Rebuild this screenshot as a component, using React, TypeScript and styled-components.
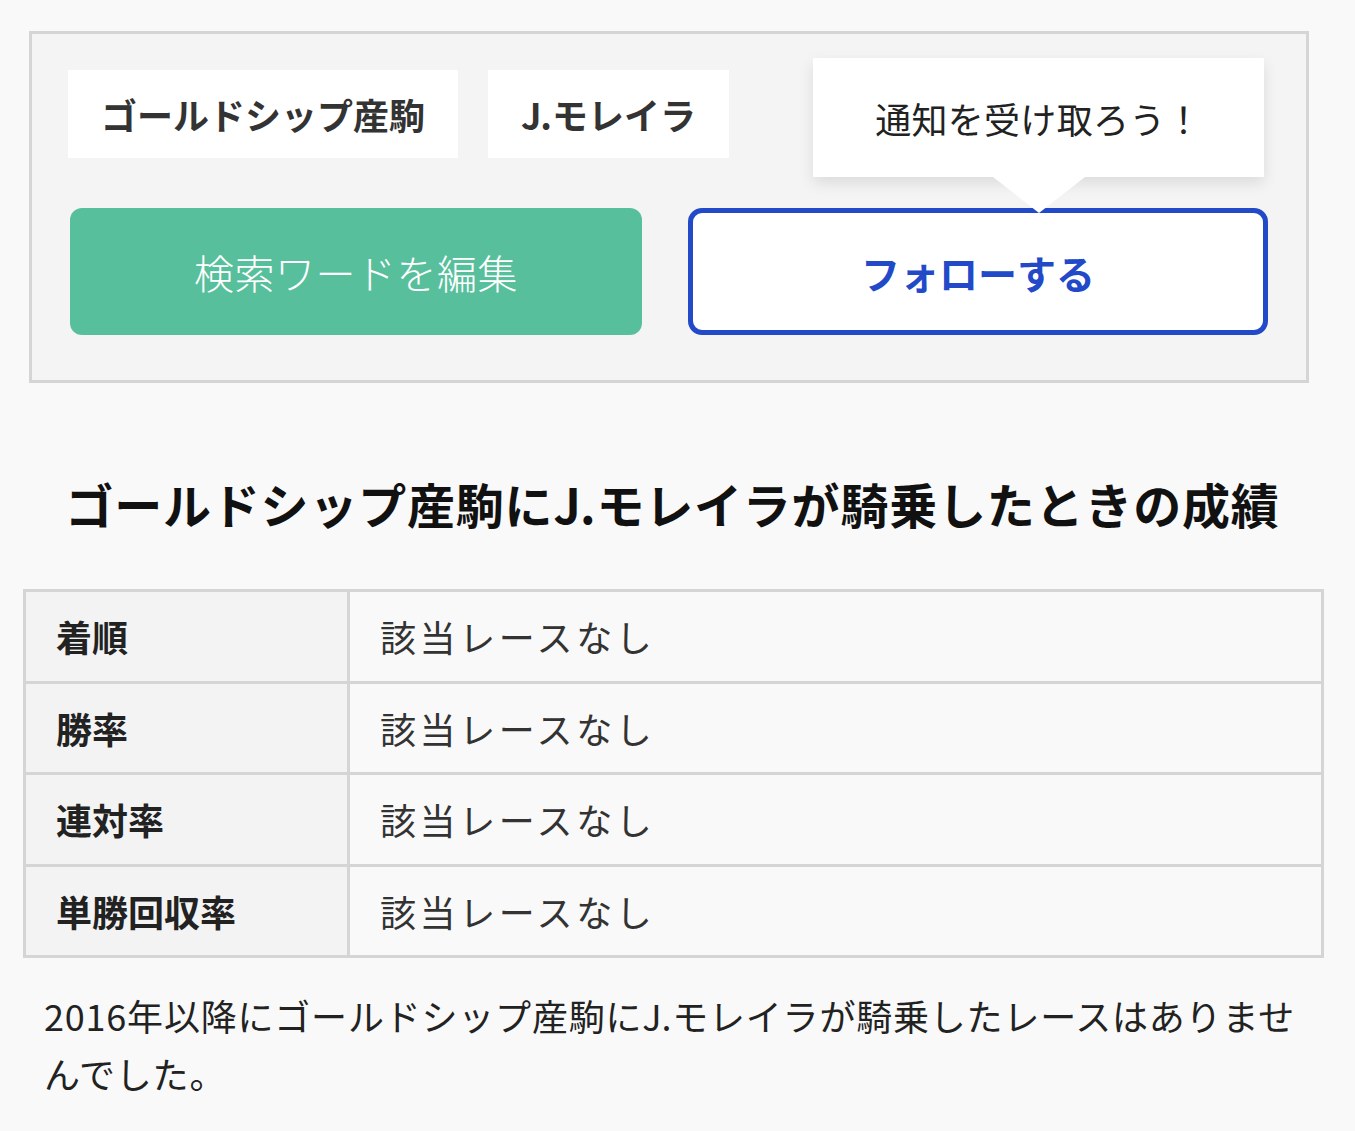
import styled, { createGlobalStyle } from "styled-components";

const GlobalStyle = createGlobalStyle`
  html, body {
    margin: 0;
    padding: 0;
    background: #f9f9f9;
    font-family: "Noto Sans CJK JP", "Noto Sans", sans-serif;
    color: #222;
  }
`;

const Page = styled.div`
  padding: 31px 0 40px;
`;

const SearchBox = styled.section`
  margin: 0 46px 0 29px;
  background: #f4f4f4;
  border: 3px solid #d5d5d5;
  padding: 36px 38px 45px 36px;
`;

const TagRow = styled.div`
  display: flex;
  gap: 30px;
`;

const Tag = styled.div`
  background: #fff;
  height: 88px;
  padding: 0 33px;
  display: flex;
  align-items: center;
  font-size: 36px;
  font-weight: 700;
  color: #333;
`;

const ButtonRow = styled.div`
  display: grid;
  grid-template-columns: 572px 580px;
  gap: 46px;
  margin-top: 50px;
  padding-left: 2px;
`;

const EditButton = styled.button`
  height: 127px;
  border: none;
  border-radius: 12px;
  background: #58bf9c;
  color: #fff;
  font-family: inherit;
  font-size: 40px;
  font-weight: 300;
  letter-spacing: 0.5px;
`;

const FollowWrap = styled.div`
  position: relative;
`;

const FollowButton = styled.button`
  width: 100%;
  height: 127px;
  border: 5px solid #2249c8;
  border-radius: 14px;
  background: #fff;
  color: #2249c8;
  font-family: inherit;
  font-size: 39px;
  font-weight: 700;
`;

const Tooltip = styled.div`
  position: absolute;
  right: 4px;
  bottom: calc(100% + 31px);
  width: 451px;
  height: 119px;
  box-sizing: border-box;
  background: #fff;
  box-shadow: 0 6px 14px rgba(0, 0, 0, 0.1);
  display: flex;
  align-items: center;
  justify-content: center;
  font-size: 36px;
  color: #222;
  white-space: nowrap;
  letter-spacing: 0.3px;

  &::after {
    content: "";
    position: absolute;
    top: 100%;
    left: 180px;
    border-left: 46px solid transparent;
    border-right: 46px solid transparent;
    border-top: 36px solid #fff;
  }
`;

const Heading = styled.h2`
  margin: 84px 10px 50px 0;
  text-align: center;
  font-size: 48px;
  line-height: 72px;
  font-weight: 700;
  color: #111;
  letter-spacing: 0.8px;
`;

const StatsTable = styled.table`
  margin: 0 31px 0 23px;
  width: calc(100% - 54px);
  border-collapse: collapse;
  border: 3px solid #d5d5d5;
`;

const Cell = styled.td<{ $head?: boolean }>`
  border: 3px solid #d5d5d5;
  height: 88.5px;
  padding: 0 30px;
  font-size: 36px;
  background: ${(p) => (p.$head ? "#f3f3f3" : "#f9f9f9")};
  font-weight: ${(p) => (p.$head ? 700 : 400)};
  color: ${(p) => (p.$head ? "#222" : "#333")};
  letter-spacing: ${(p) => (p.$head ? "0" : "3.6px")};
  width: ${(p) => (p.$head ? "261px" : "auto")};
`;

const Note = styled.p`
  margin: 28px 50px 0 44px;
  font-size: 36px;
  line-height: 58px;
  color: #222;
  letter-spacing: 0.8px;
`;

const rows = ["着順", "勝率", "連対率", "単勝回収率"];

export default function App() {
  return (
    <>
      <GlobalStyle />
      <Page>
        <SearchBox>
          <TagRow>
            <Tag>ゴールドシップ産駒</Tag>
            <Tag>J.モレイラ</Tag>
          </TagRow>
          <ButtonRow>
            <EditButton>検索ワードを編集</EditButton>
            <FollowWrap>
              <FollowButton>フォローする</FollowButton>
              <Tooltip>通知を受け取ろう！</Tooltip>
            </FollowWrap>
          </ButtonRow>
        </SearchBox>

        <Heading>ゴールドシップ産駒にJ.モレイラが騎乗したときの成績</Heading>

        <StatsTable>
          <tbody>
            {rows.map((label) => (
              <tr key={label}>
                <Cell as="th" $head style={{ textAlign: "left" }}>
                  {label}
                </Cell>
                <Cell>該当レースなし</Cell>
              </tr>
            ))}
          </tbody>
        </StatsTable>

        <Note>
          2016年以降にゴールドシップ産駒にJ.モレイラが騎乗したレースはありませんでした。
        </Note>
      </Page>
    </>
  );
}
